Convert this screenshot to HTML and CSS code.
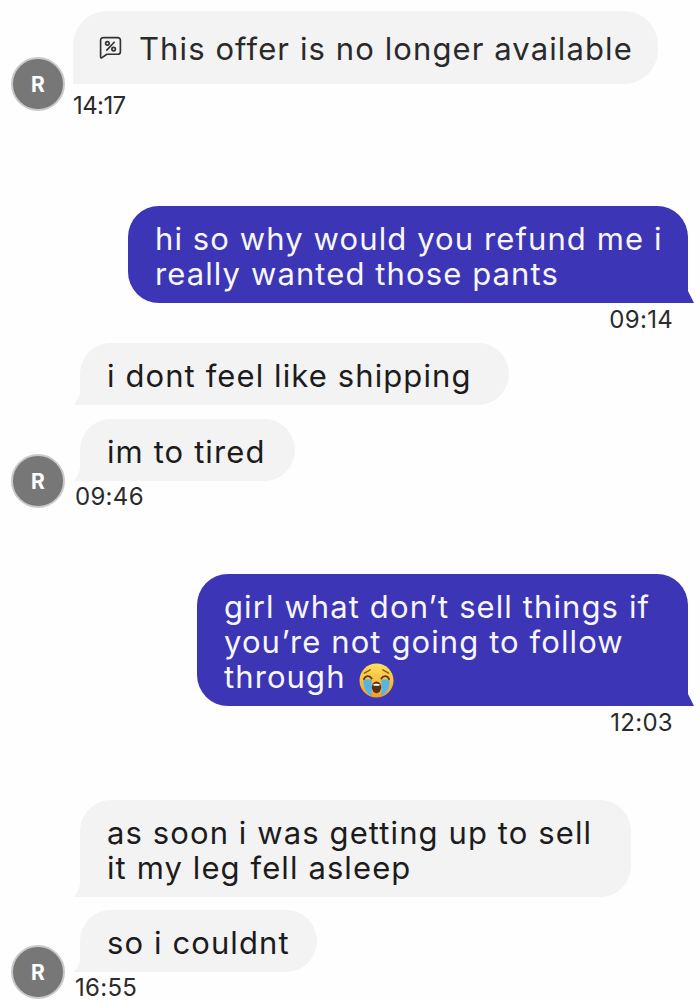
FILE: index.html
```html
<!DOCTYPE html>
<html lang="en">
<head>
<meta charset="utf-8">
<title>Chat</title>
<link rel="stylesheet" href="styles.css">
</head>
<body>
<main class="chat">
  <section class="group in first">
    <div class="avatar">R</div>
    <div class="stack">
      <div class="bubble offer">
        <svg class="offer-icon" viewBox="0 0 24 24" fill="none" stroke="#333" stroke-width="1.6"><path d="M5 2.500h14a2.500 2.500 0 0 1 2.500 2.500v11a2.500 2.500 0 0 1-2.500 2.500H8.500L3.500 22a1 1 0 0 1-1-1V5A2.500 2.500 0 0 1 5 2.500z" stroke-linejoin="round"/><circle cx="9" cy="8" r="1.700"/><circle cx="15" cy="13.500" r="1.700"/><path d="M16 6.500 8 15"/></svg>
        <span>This offer is no longer available</span>
      </div>
      <div class="time narrow">14:17</div>
    </div>
  </section>

  <section class="group out g-out1">
    <div class="bubble sent w1">hi so why would you refund me i<br>really wanted those pants</div>
    <div class="time">09:14</div>
  </section>

  <section class="group in g-in2">
    <div class="avatar">R</div>
    <div class="stack">
      <div class="bubble recv w2">i dont feel like shipping</div>
      <div class="bubble recv w3">im to tired</div>
      <div class="time tailed">09:46</div>
    </div>
  </section>

  <section class="group out g-out2">
    <div class="bubble sent w4">girl what don’t sell things if<br>you’re not going to follow<br>through <svg class="emoji" viewBox="0 0 36 36"><defs><linearGradient id="face" x1="0" y1="0" x2="0" y2="1"><stop offset="0" stop-color="#fde25e"/><stop offset="1" stop-color="#f39c1f"/></linearGradient></defs><circle cx="18" cy="18" r="17.500" fill="url(#face)"/><path d="M4.500 17h8.500v17C8 32 4 25 4.500 17zM23 17h8.500c.5 8-3.500 15-8.500 17z" fill="#59b4e6"/><path d="M5 16.500c1.500-3.500 6-4 8-.5M23 16c2-3.500 6.500-3 8 .5" stroke="#5a3518" stroke-width="1.800" fill="none" stroke-linecap="round"/><path d="M5.500 10.500l6-3.500M30.500 10.500l-6-3.500" stroke="#8a5a20" stroke-width="1.500" fill="none" stroke-linecap="round"/><ellipse cx="18" cy="25" rx="4.800" ry="6" fill="#5a2d14"/><path d="M14.500 22.500c1-1.500 6-1.500 7 0l-1 1h-5z" fill="#fff"/></svg></div>
    <div class="time">12:03</div>
  </section>

  <section class="group in g-in3">
    <div class="avatar">R</div>
    <div class="stack">
      <div class="bubble recv w5">as soon i was getting up to sell<br>it my leg fell asleep</div>
      <div class="bubble recv w6">so i couldnt</div>
      <div class="time tailed">16:55</div>
    </div>
  </section>
</main>
</body>
</html>
```
FILE: styles.css
```css
* { box-sizing: border-box; }
html, body { margin: 0; background: #fefefe; }
body {
  width: 700px;
  height: 1002px;
  overflow: hidden;
  font-family: Inter, "Liberation Sans", sans-serif;
  color: #222;
}
.chat { display: flex; flex-direction: column; padding: 11px 0 0 0; }

.group.in {
  display: flex;
  align-items: flex-end;
  gap: 8px;
  padding-left: 11px;
}
.avatar {
  flex: none;
  width: 54px;
  height: 54px;
  margin-bottom: 3px;
  border-radius: 50%;
  background: #777;
  border: 2px solid #c9c9c9;
  color: #fff;
  font: 700 21px/52px Inter, "Liberation Sans", sans-serif;
  text-align: center;
}
.first .avatar { margin-bottom: 9px; }
.stack { display: flex; flex-direction: column; align-items: flex-start; }

.bubble {
  font-size: 31px;
  line-height: 35px;
  letter-spacing: 1.1px;
  padding: 14.5px 27px 12.5px;
  position: relative;
  white-space: nowrap;
}
.offer {
  width: 585px;
  height: 73px;
  display: flex;
  align-items: center;
  gap: 16px;
  padding: 2px 25px 0;
  background: #f3f3f4;
  color: #2a2a2a;
  border-radius: 34px 34px 34px 0;
}
.offer-icon { width: 25px; height: 25px; flex: none; margin-top: -2px; }

.recv {
  margin-left: 7px;
  background: #f3f3f4;
  color: #1c1c1c;
  border-radius: 31px 31px 31px 0;
}
.recv + .recv { margin-top: 14px; }
.recv.w6 { margin-top: 13px; }
.recv::before {
  content: "";
  position: absolute;
  left: -6px;
  bottom: 0;
  width: 7px;
  height: 18px;
  background: #f3f3f4;
  clip-path: path("M7 0 C6.500 7 4 13 0 18 L7 18 Z");
}

.sent {
  background: #3c35b5;
  color: #f6f6fb;
  border-radius: 31px 31px 0 31px;
}
.sent::after {
  content: "";
  position: absolute;
  right: -6px;
  bottom: 0;
  width: 7px;
  height: 14px;
  background: #3c35b5;
  clip-path: polygon(0 0, 100% 100%, 0 100%);
}

.group.out {
  display: flex;
  flex-direction: column;
  align-items: flex-end;
  padding-right: 12px;
}

.time {
  font-size: 24px;
  line-height: 28px;
  margin-top: 8px;
  letter-spacing: 0.3px;
  color: #2b2b2b;
}
.group.out .time { margin-right: 15px; margin-top: 3px; }
.group.in .time.tailed { margin: 2px 0 0 2px; }
.time.narrow { letter-spacing: -0.6px; }

.w1 { width: 560px; }
.w2 { width: 429px; }
.w3 { width: 215px; }
.w4 { width: 491px; }
.w5 { width: 551px; }
.w6 { width: 237px; }

.g-out1 { margin-top: 86px; }
.g-in2 { margin-top: 9px; }
.g-out2 { margin-top: 63px; }
.g-in3 { margin-top: 63px; }

.emoji { width: 35px; height: 35px; vertical-align: -6px; margin: -4px 0 -4px 4px; }
```
